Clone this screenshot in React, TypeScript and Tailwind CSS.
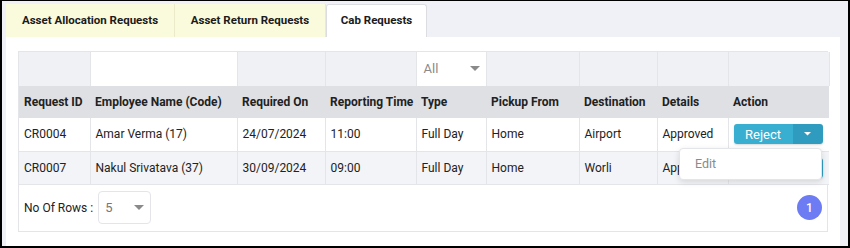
import type { ReactNode } from "react";

const cols = [71, 147, 88, 91, 70, 93, 78, 71, 101];

const headers = [
  "Request ID",
  "Employee Name (Code)",
  "Required On",
  "Reporting Time",
  "Type",
  "Pickup From",
  "Destination",
  "Details",
  "Action",
];

const rows = [
  ["CR0004", "Amar Verma (17)", "24/07/2024", "11:00", "Full Day", "Home", "Airport", "Approved"],
  ["CR0007", "Nakul Srivatava (37)", "30/09/2024", "09:00", "Full Day", "Home", "Worli", "Approved"],
];

function Caret() {
  return (
    <svg width="10" height="6" viewBox="0 0 10 6" className="shrink-0">
      <path d="M0 0 L10 0 L5 5 Z" fill="#8a8a8a" />
    </svg>
  );
}

function RejectButton() {
  return (
    <div className="flex h-[20px] w-[89px] overflow-hidden rounded-[3px] text-white shadow-[0_1px_2px_rgba(0,0,0,0.15)]">
      <span className="flex flex-1 items-center justify-center bg-[#38aed0] text-[13px]">Reject</span>
      <span className="flex w-[30px] items-center justify-center bg-[#2f9cbf]">
        <svg width="7" height="4" viewBox="0 0 7 4">
          <path d="M0 0 L7 0 L3.5 3.5 Z" fill="#ffffff" />
        </svg>
      </span>
    </div>
  );
}

function Tab({ children, active, w }: { children: ReactNode; active?: boolean; w: string }) {
  return (
    <div
      className={
        active
          ? `flex h-[33px] ${w} items-center justify-center rounded-t-[3px] border border-b-0 border-[#dcdde2] bg-white text-[11.5px] font-bold text-[#1b1b1b]`
          : `flex h-[33px] ${w} items-center justify-center border-r border-[#ebebc9] bg-[#fafadc] text-[11.5px] font-bold text-[#1b1b1b]`
      }
    >
      {children}
    </div>
  );
}

export default function App() {
  return (
    <div
      className="flex h-[248px] w-[850px] flex-col border-t border-r-2 border-b-2 border-l-2 border-black bg-[#f0f1f6]"
      style={{ fontFamily: "Roboto, 'Liberation Sans', sans-serif" }}
    >
      <div className="ml-[4px] mt-[3px] flex">
        <Tab w="w-[169px]">Asset Allocation Requests</Tab>
        <Tab w="w-[151px]">Asset Return Requests</Tab>
        <Tab w="w-[101px]" active>
          Cab Requests
        </Tab>
      </div>

      <div className="ml-[4px] mr-[8px] flex-1 bg-white px-[12px] pt-[14px]">
        <div className="relative w-[810px] border border-[#e3e5e9]">
          <table className="w-[810px] table-fixed border-collapse text-[12px] text-[#222]">
            <colgroup>
              {cols.map((c, i) => (
                <col key={i} style={{ width: c }} />
              ))}
            </colgroup>
            <tbody>
              <tr className="h-[34px] bg-[#f0f1f4]">
                {cols.map((_, i) => (
                  <td
                    key={i}
                    className={`border-r border-[#e3e5e9] p-0 ${i === 1 || i === 4 ? "bg-white" : ""}`}
                  >
                    {i === 4 && (
                      <div className="flex items-center justify-between pl-[7px] pr-[6px] text-[13px] text-[#8a8a8a]">
                        <span>All</span>
                        <Caret />
                      </div>
                    )}
                  </td>
                ))}
              </tr>
              <tr className="h-[32px] bg-[#dfe0e4]">
                {headers.map((h) => (
                  <td key={h} className="px-[5px] font-bold whitespace-nowrap">
                    {h}
                  </td>
                ))}
              </tr>
              {rows.map((r, ri) => (
                <tr key={ri} className={`h-[33px] ${ri === 1 ? "bg-[#f3f4f7]" : "bg-white"}`}>
                  {r.map((c, ci) => (
                    <td key={ci} className="border-r border-b border-[#e3e5e9] px-[5px] whitespace-nowrap overflow-hidden">
                      {c}
                    </td>
                  ))}
                  <td className="border-b border-[#e3e5e9] px-[5px]">
                    <RejectButton />
                  </td>
                </tr>
              ))}
            </tbody>
          </table>

          <div className="flex h-[46px] items-center justify-between pl-[5px] pr-[5px]">
            <div className="flex items-center gap-[5px] text-[12px] text-[#222]">
              <span>No Of Rows :</span>
              <div className="flex h-[33px] w-[53px] items-center justify-between rounded-[4px] border border-[#e3e5e9] pl-[6px] pr-[6px] text-[13px] text-[#777]">
                <span>5</span>
                <Caret />
              </div>
            </div>
            <div className="flex h-[25px] w-[25px] items-center justify-center rounded-full bg-[#6e7cf3] text-[12px] font-medium text-white">
              1
            </div>
          </div>

          <div className="absolute left-[660px] top-[96px] flex h-[32px] w-[143px] items-center rounded-[4px] border border-[#e3e5e9] bg-white pl-[15px] text-[12.5px] text-[#8a8a8a] shadow-[0_2px_6px_rgba(0,0,0,0.12)]">
            Edit
          </div>
        </div>
      </div>
    </div>
  );
}
